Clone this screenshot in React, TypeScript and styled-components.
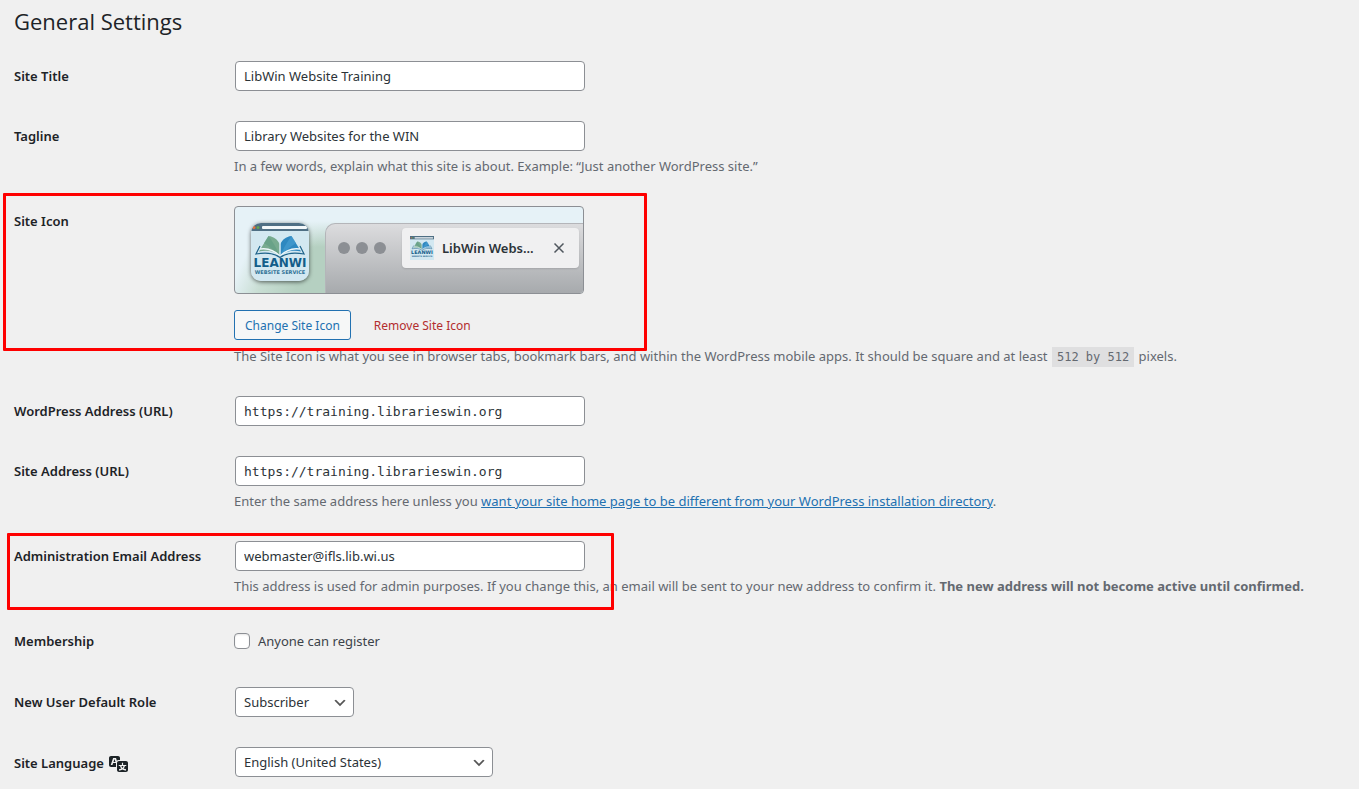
import React from "react";
import styled, { createGlobalStyle } from "styled-components";

const sans = `"Noto Sans", "Open Sans", sans-serif`;
const mono = `"DejaVu Sans Mono", "Liberation Mono", monospace`;

const GlobalStyle = createGlobalStyle`
  *, *::before, *::after { box-sizing: border-box; }
  body {
    margin: 0;
    background: #f0f0f0;
    color: #3c434a;
    font: 13px/18px ${sans};
  }
`;

const Page = styled.main`
  padding: 6px 14px 0;
  overflow: hidden;
`;

const Title = styled.h1`
  margin: 0 0 10px;
  color: #1d2327;
  font-family: "Open Sans", "Noto Sans", sans-serif;
  font-size: 22px;
  font-weight: 400;
  line-height: 30px;
`;

const Row = styled.div`
  position: relative;
  display: grid;
  grid-template-columns: 220px minmax(0, 1fr);
  padding: 15px 0;
`;

const heading = `
  display: flex;
  align-items: center;
  gap: 5px;
  align-self: start;
  padding-top: 6px;
  color: #1d2327;
  font-weight: 600;
`;

const RowLabel = styled.label`${heading}`;
const RowHeading = styled.div`${heading}`;

const Field = styled.div`
  display: flex;
  flex-direction: column;
  align-items: flex-start;
`;

const control = `
  height: 30px;
  margin: 0 1px;
  border: 1px solid #8c8f94;
  border-radius: 4px;
  background: #fff;
  color: #2c3338;
`;

const TextInput = styled.input<{ $code?: boolean }>`
  ${control}
  width: 350px;
  max-width: 100%;
  padding: 0 8px;
  font: 13px/28px ${(p) => (p.$code ? mono : sans)};
`;

const Description = styled.p`
  margin: 6px 0 0;
  color: #646970;
  line-height: 19px;
`;

const Code = styled.code`
  margin: 0 1px;
  padding: 3px 5px 3px;
  background: #dfdfe0;
  font: 12px/14px ${mono};
`;

const Link = styled.a`
  color: #2271b1;
  text-decoration: underline;
`;

const Highlight = styled.div<{ $top: number; $left: number; $width: number; $height: number }>`
  position: absolute;
  top: ${(p) => p.$top}px;
  left: ${(p) => p.$left}px;
  width: ${(p) => p.$width}px;
  height: ${(p) => p.$height}px;
  border: 3px solid #fe0000;
  border-radius: 1px;
  pointer-events: none;
`;

const Preview = styled.div`
  display: flex;
  align-items: flex-end;
  width: 350px;
  max-width: 100%;
  height: 88px;
  border: 1px solid #8c8f94;
  border-radius: 4px;
  overflow: hidden;
  background:
    linear-gradient(180deg, #e6f2f7 14px, rgba(230, 242, 247, 0) 40px),
    linear-gradient(115deg, #e6f2f7 30px, #c9ded4 56px, #b5d0c1 90px, #b5d0c1 150px, #e6f2f7 200px);
`;

const AppIcon = styled.div`
  flex: none;
  width: 58px;
  height: 58px;
  margin: 0 16px 12px;
  border-radius: 10px;
  overflow: hidden;
  box-shadow: 0 1px 4px rgba(0, 0, 0, 0.6);

  svg { display: block; }
`;

const Browser = styled.div`
  flex: 1;
  display: flex;
  align-items: flex-start;
  gap: 16px;
  height: 70px;
  padding: 4px 4px 0 12px;
  border: 1px solid #b4b5b9;
  border-width: 1px 0 0 1px;
  border-top-left-radius: 10px;
  background: linear-gradient(180deg, #dcdcde, #a7aaad);
`;

const Dots = styled.div`
  display: flex;
  gap: 6px;
  padding-top: 14px;

  i {
    width: 12px;
    height: 12px;
    border-radius: 50%;
    background: #8c8f94;
  }
`;

const Tab = styled.div`
  flex: 1;
  display: flex;
  align-items: center;
  gap: 8px;
  height: 40px;
  padding: 0 14px 0 8px;
  border-radius: 4px;
  background: #f0f0f1;
  box-shadow: 0 1px 2px rgba(0, 0, 0, 0.12);
  color: #2c3338;
  font-weight: 600;

  svg { flex: none; }
`;

const TabTitle = styled.span`
  flex: 1;
  white-space: nowrap;
`;

const Actions = styled.div`
  display: flex;
  gap: 12px;
  margin: 16px 0 1px;
`;

const Button = styled.button<{ $danger?: boolean }>`
  height: 30px;
  padding: 1px 10px 0;
  border: 1px solid ${(p) => (p.$danger ? "transparent" : "#2271b1")};
  border-radius: 3px;
  background: ${(p) => (p.$danger ? "transparent" : "#f6f7f7")};
  color: ${(p) => (p.$danger ? "#b32d2e" : "#2271b1")};
  font: 12px/27px ${sans};
  cursor: pointer;
`;

const CheckLabel = styled.label`
  display: flex;
  align-items: center;
  gap: 8px;
  padding: 6px 0 7px;
`;

const Checkbox = styled.input`
  appearance: none;
  width: 16px;
  height: 16px;
  margin: 0;
  border: 1px solid #8c8f94;
  border-radius: 4px;
  background: #fff;
  box-shadow: inset 0 1px 2px rgba(0, 0, 0, 0.1);

  &:checked { background: #2271b1; }
`;

const SelectWrap = styled.div<{ $width: number }>`
  position: relative;
  width: ${(p) => p.$width}px;

  svg {
    position: absolute;
    top: 8px;
    right: 7px;
    pointer-events: none;
  }
`;

const SelectBox = styled.select`
  ${control}
  appearance: none;
  width: calc(100% - 2px);
  padding: 0 24px 0 8px;
  font: 13px/28px ${sans};
`;

function Logo({ size }: { size: number }) {
  return (
    <svg width={size} height={size} viewBox="0 0 58 58" aria-hidden="true">
      <rect width="58" height="58" fill="#d3e8f1" />
      <rect width="58" height="8" fill="#4f6f84" />
      <circle cx="3" cy="4.5" r="1.5" fill="#e8703a" />
      <circle cx="7" cy="4.5" r="1.5" fill="#63a653" />
      <rect x="11" y="3" width="45" height="3" rx="1" fill="#f3f8fa" />
      <path d="M28.500 33C24 28 15 26.500 8 28.500L17.500 13C23 13.500 27 17 28.500 21Z" fill="#78ab90" />
      <path d="M28.500 33C26 25 21 18 17.500 13L13 20C19 24 24 28 28.500 33Z" fill="#5f9c84" opacity=".6" />
      <path d="M29.500 33C34 28 43 26.500 50 28.500L40.500 13C35 13.500 31 17 29.500 21Z" fill="#2e88c0" />
      <path d="M29.500 33C32 25 37 18 40.500 13L45 20C39 24 34 28 29.500 33Z" fill="#4aa0d2" opacity=".6" />
      <path d="M29 33C23 27 15 25 9 26M29 33C35 27 43 25 49 26" fill="none" stroke="#eef7fa" strokeWidth="1.400" />
      <path d="M9 23L5 31C15 29 23 30 29 34.500C35 30 43 29 53 31L49 23" fill="none" stroke="#20648b" strokeWidth="1.200" />
      <path d="M29 19V33" stroke="#d3e8f1" strokeWidth="1" />
      <text x="29" y="44" textAnchor="middle" fontFamily="DejaVu Sans, sans-serif" fontSize="12" fontWeight="700" fill="#135e8a">LEANWI</text>
      <text x="29" y="51" textAnchor="middle" fontFamily="DejaVu Sans, sans-serif" fontSize="5" fontWeight="700" fill="#2f7196">WEBSITE SERVICE</text>
    </svg>
  );
}

function CloseIcon() {
  return (
    <svg width="12" height="12" viewBox="0 0 12 12" aria-hidden="true">
      <path d="M1.500 1.500L10.500 10.500M10.500 1.500L1.500 10.500" stroke="#50575e" strokeWidth="1.500" />
    </svg>
  );
}

function TranslationIcon() {
  return (
    <svg width="20" height="20" viewBox="0 0 20 20" fill="#1d2327" aria-hidden="true">
      <path d="M11 7H9.490c-.63 0-1.250.3-1.590.7L7 5H4.130l-2.390 7h1.690l.74-2H7v4H2c-1.100 0-2-.9-2-2V5c0-1.100.9-2 2-2h7c1.100 0 2 .9 2 2v2zM6.510 9H4.490l1-2.930zM10 8h7c1.100 0 2 .9 2 2v7c0 1.100-.9 2-2 2h-7c-1.100 0-2-.9-2-2v-7c0-1.100.9-2 2-2zm7.250 5v-1.080h-3.170V9.750h-1.160v2.170H9.750V13h1.280c.11.85.56 1.850 1.280 2.620-.87.36-1.890.62-2.310.62-.01.02.22.97.2 1.460.84 0 2.210-.5 3.280-1.150 1.090.65 2.480 1.150 3.340 1.150-.02-.49.2-1.440.2-1.460-.43 0-1.490-.27-2.380-.63.7-.77 1.140-1.770 1.250-2.610h1.360zm-3.810 1.930c-.5-.46-.85-1.130-1.010-1.930h2.090c-.17.8-.51 1.470-1 1.930l-.04.03s-.03-.02-.04-.03z" />
    </svg>
  );
}

function Select({ id, width, options }: { id: string; width: number; options: string[] }) {
  return (
    <SelectWrap $width={width}>
      <SelectBox id={id}>
        {options.map((o) => <option key={o}>{o}</option>)}
      </SelectBox>
      <svg width="16" height="16" viewBox="0 0 20 20" aria-hidden="true">
        <path d="M5 6l5 5 5-5 2 1-7 7-7-7 2-1z" fill="#555" />
      </svg>
    </SelectWrap>
  );
}

export default function App() {
  return (
    <>
      <GlobalStyle />
      <Page>
        <Title>General Settings</Title>
        <form>
          <Row>
            <RowLabel htmlFor="blogname">Site Title</RowLabel>
            <Field><TextInput id="blogname" type="text" defaultValue="LibWin Website Training" /></Field>
          </Row>
          <Row>
            <RowLabel htmlFor="tagline">Tagline</RowLabel>
            <Field>
              <TextInput id="tagline" type="text" defaultValue="Library Websites for the WIN" />
              <Description>In a few words, explain what this site is about. Example: “Just another WordPress site.”</Description>
            </Field>
          </Row>
          <Row>
            <RowHeading>Site Icon</RowHeading>
            <Field>
              <Preview>
                <AppIcon><Logo size={58} /></AppIcon>
                <Browser>
                  <Dots><i /><i /><i /></Dots>
                  <Tab>
                    <Logo size={24} />
                    <TabTitle>LibWin Webs...</TabTitle>
                    <CloseIcon />
                  </Tab>
                </Browser>
              </Preview>
              <Actions>
                <Button type="button">Change Site Icon</Button>
                <Button type="button" $danger>Remove Site Icon</Button>
              </Actions>
              <Description>
                The Site Icon is what you see in browser tabs, bookmark bars, and within the WordPress mobile apps. It should be square and at least <Code>512 by 512</Code> pixels.
              </Description>
            </Field>
            <Highlight $top={2} $left={-11} $width={644} $height={158} />
          </Row>
          <Row>
            <RowLabel htmlFor="siteurl">WordPress Address (URL)</RowLabel>
            <Field><TextInput id="siteurl" type="url" $code defaultValue="https://training.librarieswin.org" /></Field>
          </Row>
          <Row>
            <RowLabel htmlFor="home">Site Address (URL)</RowLabel>
            <Field>
              <TextInput id="home" type="url" $code defaultValue="https://training.librarieswin.org" />
              <Description>
                Enter the same address here unless you <Link href="#directory">want your site home page to be different from your WordPress installation directory</Link>.
              </Description>
            </Field>
          </Row>
          <Row>
            <RowLabel htmlFor="email">Administration Email Address</RowLabel>
            <Field>
              <TextInput id="email" type="email" defaultValue="webmaster@ifls.lib.wi.us" />
              <Description>
                This address is used for admin purposes. If you change this, an email will be sent to your new address to confirm it. <strong>The new address will not become active until confirmed.</strong>
              </Description>
            </Field>
            <Highlight $top={7} $left={-7} $width={607} $height={77} />
          </Row>
          <Row>
            <RowHeading>Membership</RowHeading>
            <Field>
              <CheckLabel><Checkbox type="checkbox" />Anyone can register</CheckLabel>
            </Field>
          </Row>
          <Row>
            <RowLabel htmlFor="role">New User Default Role</RowLabel>
            <Field><Select id="role" width={121} options={["Subscriber"]} /></Field>
          </Row>
          <Row>
            <RowLabel htmlFor="language">Site Language <TranslationIcon /></RowLabel>
            <Field><Select id="language" width={260} options={["English (United States)"]} /></Field>
          </Row>
        </form>
      </Page>
    </>
  );
}
